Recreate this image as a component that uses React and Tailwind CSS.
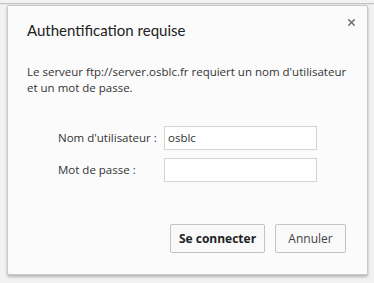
import { X } from "lucide-react";

export default function App() {
  return (
    <div
      className="h-[283px] w-[374px] overflow-hidden bg-[#f2f2f2] pt-[3px]"
      style={{ fontFamily: '"Open Sans", "Noto Sans", sans-serif' }}
    >
      <div className="h-[2px] w-full border-t border-[#c4c4c4] bg-[#e6e6e6]" />
      <div className="relative ml-[7px] flex h-[270px] w-[361px] flex-col rounded-[2px] border border-[#c9c9c9] bg-[#fbfbfb] shadow-[0_2px_3px_rgba(0,0,0,0.25)]">
        <button className="absolute right-[10px] top-[11px] text-[#6b6b6b]">
          <X size={11} strokeWidth={3} />
        </button>
        <h1 className="mt-[13px] pl-[19px] font-['Lato',sans-serif] text-[15px] leading-[22px] text-[#222]">
          Authentification requise
        </h1>
        <p className="mt-[23px] pl-[19px] pr-[10px] text-[11.5px] leading-[16px] text-[#333]">
          Le serveur ftp://server.osblc.fr requiert un nom d'utilisateur
          <br />
          et un mot de passe.
        </p>
        <div className="mt-[30px] grid grid-cols-[106px_153px] gap-y-[8px] pl-[50px] text-[11.5px] text-[#333]">
          <label className="flex h-[24px] items-center">Nom d'utilisateur :</label>
          <div className="flex h-[24px] items-center border border-[#d3d3d3] bg-white px-[3px]">osblc</div>
          <label className="flex h-[24px] items-center">Mot de passe :</label>
          <div className="h-[24px] border border-[#d3d3d3] bg-white" />
        </div>
        <div className="mt-auto flex justify-end gap-[10px] pb-[21px] pr-[21px]">
          <button className="h-[29px] w-[95px] rounded-[2px] border border-[#c3c3c3] bg-[#f9f9f9] text-[12px] font-bold text-[#222]">
            Se connecter
          </button>
          <button className="h-[29px] w-[71px] rounded-[2px] border border-[#c3c3c3] bg-[#f9f9f9] text-[12px] text-[#444]">
            Annuler
          </button>
        </div>
      </div>
    </div>
  );
}
